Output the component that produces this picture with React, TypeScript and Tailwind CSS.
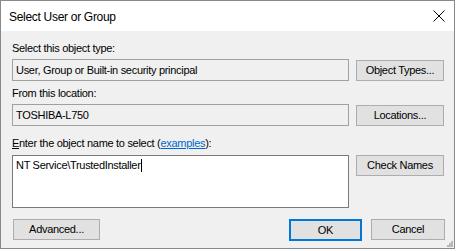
import React from "react";

const font = { fontFamily: '"Liberation Sans", Arial, sans-serif' };

function Btn({ children, w, primary }: { children: React.ReactNode; w: string; primary?: boolean }) {
  return (
    <div
      className={`${w} flex items-center justify-center bg-[#e1e1e1] text-[11px] text-black ${
        primary ? "h-[22px] border-2 border-[#0078d7]" : "h-[21px] border border-[#adadad]"
      }`}
    >
      {children}
    </div>
  );
}

export default function App() {
  return (
    <div className="w-[457px] h-[251px] bg-white tracking-[-0.3px]" style={font}>
      <div className="w-[455px] h-[249px] border border-[#8a8a8a] flex flex-col bg-[#f0f0f0]">
        {/* Title bar */}
        <div className="h-[30px] bg-white flex items-center justify-between pl-[8px] pr-[8px] shrink-0">
          <span className="text-[12px] text-black pt-[1px]">Select User or Group</span>
          <svg width="12" height="12" viewBox="0 0 12 12" className="mr-[1px]">
            <path d="M0.5 0.5 L11.5 11.5 M11.5 0.5 L0.5 11.5" stroke="#000" strokeWidth="1" />
          </svg>
        </div>

        {/* Body */}
        <div className="flex-1 flex flex-col pl-[11px] pr-[9px] pt-[11px] text-[11px] leading-[13px] text-black relative">
          <div>Select this object type:</div>
          <div className="flex items-start gap-[7px] mt-[4px]">
            <div className="w-[337px] h-[22px] border border-[#a0a0a0] bg-[#f0f0f0] flex items-center pl-[3px]">
              User, Group or Built-in security principal
            </div>
            <div className="pt-[1px]">
              <Btn w="w-[88px]">Object Types...</Btn>
            </div>
          </div>

          <div className="mt-[6px]">From this location:</div>
          <div className="flex items-start gap-[7px] mt-[4px]">
            <div className="w-[337px] h-[22px] border border-[#a0a0a0] bg-[#f0f0f0] flex items-center pl-[3px]">
              TOSHIBA-L750
            </div>
            <div className="pt-[1px]">
              <Btn w="w-[88px]">Locations...</Btn>
            </div>
          </div>

          <div className="mt-[11px]">
            <span className="underline">E</span>nter the object name to select (
            <span className="text-[#0066cc] underline">examples</span>):
          </div>
          <div className="flex items-start gap-[7px] mt-[5px]">
            <div className="w-[337px] h-[53px] border border-[#7a7a7a] bg-white pl-[3px] pt-[3px]">
              <span>NT Service\TrustedInstaller</span>
              <span className="inline-block w-px h-[13px] bg-black align-top" />
            </div>
            <div>
              <Btn w="w-[88px]">Check Names</Btn>
            </div>
          </div>

          <div className="flex items-start mt-[11px]">
            <div className="ml-[1px]">
              <Btn w="w-[87px]">Advanced...</Btn>
            </div>
            <div className="ml-auto flex items-start gap-[9px]">
              <Btn w="w-[73px]" primary>
                OK
              </Btn>
              <Btn w="w-[74px]">Cancel</Btn>
            </div>
          </div>

          {/* resize grip */}
          <svg width="6" height="6" viewBox="0 0 6 6" className="absolute right-[1px] bottom-[1px]">
            <rect x="4" y="0" width="2" height="2" fill="#b8b8b8" />
            <rect x="2" y="2" width="2" height="2" fill="#b8b8b8" />
            <rect x="4" y="2" width="2" height="2" fill="#b8b8b8" />
            <rect x="0" y="4" width="2" height="2" fill="#b8b8b8" />
            <rect x="2" y="4" width="2" height="2" fill="#b8b8b8" />
            <rect x="4" y="4" width="2" height="2" fill="#b8b8b8" />
          </svg>
        </div>
      </div>
    </div>
  );
}
